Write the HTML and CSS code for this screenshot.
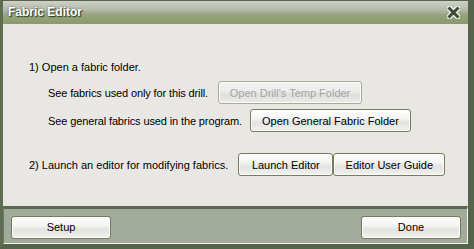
FILE: index.html
```html
<!DOCTYPE html>
<html>
<head>
    <title>Fabric Editor</title>
    <link rel="stylesheet" href="styles.css">
</head>
<body>
    <div class="window">
        <!-- Title bar -->
        <div class="titlebar">
            <span class="title">Fabric Editor</span>
            <svg class="close" width="13" height="13" viewBox="0 0 13 13">
                <path d="M2.5 2.5 L10.5 10.5 M10.5 2.5 L2.5 10.5" stroke="#eef0e8" stroke-width="5.5" stroke-linecap="square"/>
                <path d="M2.5 2.5 L10.5 10.5 M10.5 2.5 L2.5 10.5" stroke="#3f4b34" stroke-width="3" stroke-linecap="square"/>
            </svg>
        </div>

        <div class="content">
            <div class="step">1) Open a fabric folder.</div>
            <div class="row first">
                <span class="label">See fabrics used only for this drill.</span>
                <button class="btn disabled btn-temp" disabled>Open Drill's Temp Folder</button>
            </div>
            <div class="row">
                <span class="label">See general fabrics used in the program.</span>
                <button class="btn btn-general">Open General Fabric Folder</button>
            </div>
            <div class="row launch">
                <span>2) Launch an editor for modifying fabrics.</span>
                <div class="btn-group">
                    <button class="btn btn-launch">Launch Editor</button>
                    <button class="btn btn-guide">Editor User Guide</button>
                </div>
            </div>
        </div>

        <div class="footer">
            <button class="btn btn-foot">Setup</button>
            <button class="btn btn-foot">Done</button>
        </div>
    </div>
</body>
</html>
```

FILE: styles.css
```css
body {
    margin: 0;
    font-family: "Liberation Sans", Arial, sans-serif;
    font-size: 11px;
    color: #000;
    background-color: #e8e7e3;
}

.window {
    width: 474px;
    height: 249px;
    box-sizing: border-box;
    display: flex;
    flex-direction: column;
    background-color: #56654a;
    border-top: 1px solid #56654a;
    border-left: 3px solid #5f6e52;
    border-right: 6px solid #55644a;
    border-bottom: 5px solid #55644a;
}

.titlebar {
    height: 23px;
    display: flex;
    align-items: center;
    justify-content: space-between;
    padding: 0 8px 0 5px;
    background: linear-gradient(to bottom, #cfd0c9 0%, #b9bdb0 35%, #97a47c 60%, #8a9a6c 100%);
}

.title {
    color: #fff;
    font-weight: bold;
    font-size: 12px;
    text-shadow: 1px 1px 1px #2f3826, 0 0 2px #4f5a42;
    margin-top: -1px;
}

.close {
    margin-top: -1px;
}

.content {
    flex: 1;
    background-color: #e8e7e3;
    padding: 36px 0 0 26px;
}

.step {
    height: 14px;
    line-height: 14px;
}

.row {
    display: flex;
    align-items: center;
    gap: 10px;
    padding-left: 19px;
    margin-top: 5px;
}

.row.first {
    margin-top: 7px;
}

.row.launch {
    padding-left: 0;
    margin-top: 21px;
}

.label {
    letter-spacing: -0.12px;
}

.btn {
    height: 23px;
    box-sizing: border-box;
    padding: 0;
    font-family: "Liberation Sans", Arial, sans-serif;
    font-size: 11px;
    color: #000;
    border: 1px solid #737f5c;
    border-radius: 3px;
    background: linear-gradient(to bottom, #ffffff 0%, #f4f4f2 40%, #e2e2e0 60%, #f2f2f0 100%);
    box-shadow: inset 0 0 0 1px #fafaf8;
    cursor: pointer;
}

.btn.disabled {
    color: #a4a4a4;
    border-color: #a7ae98;
    background: linear-gradient(to bottom, #f4f4f2 0%, #ececea 45%, #dfdfdd 60%, #ebebea 100%);
    cursor: default;
}

.btn-temp {
    width: 144px;
}

.btn-general {
    width: 161px;
    margin-left: -2px;
}

.btn-group {
    display: flex;
}

.btn-launch {
    width: 95px;
}

.btn-guide {
    width: 112px;
}

.footer {
    height: 34px;
    display: flex;
    align-items: center;
    justify-content: space-between;
    padding: 0 6px 0 7px;
    background-color: #a1aa9b;
    border-top: 3px solid #5b6a4f;
    border-left: 1px solid #6b7860;
    border-bottom: 1px solid #f4f5f2;
    border-right: 1px solid #f4f5f2;
}

.btn-foot {
    width: 100px;
    margin-top: 2px;
}
```
